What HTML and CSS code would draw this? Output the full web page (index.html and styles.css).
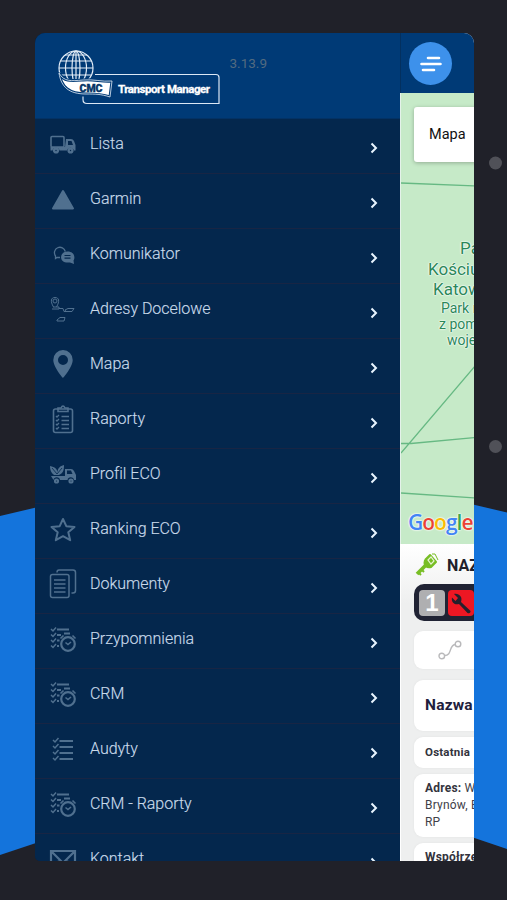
FILE: index.html
```html
<!DOCTYPE html>
<html lang="pl">
<head>
<meta charset="utf-8">
<title>Transport Manager</title>
<link rel="stylesheet" href="styles.css">
</head>
<body>
<svg class="defs" width="0" height="0" aria-hidden="true">
  <defs>
    <symbol id="truck" viewBox="0 0 28 30"><g fill="none" stroke="currentColor" stroke-width="1.6"><rect x="2" y="7.500" width="13" height="10.5" rx="1"/><circle cx="7" cy="21.5" r="1.9" stroke-width="2.400"/><circle cx="21.5" cy="21.5" r="1.9" stroke-width="2.400"/></g><path fill="currentColor" fill-rule="evenodd" d="M17 10h5q2 0 3 2l1.500 4v5.500H25a3.600 3.600 0 0 0-7 0h-7.500a3.600 3.600 0 0 0-7 0H1.500V18H16zM19 12v4h5l-1.500-4z"/></symbol>
    <symbol id="tri" viewBox="0 0 28 30"><path fill="currentColor" stroke="currentColor" stroke-width="2" stroke-linejoin="round" d="M14 7 24 24.500H4z"/></symbol>
    <symbol id="chat" viewBox="0 0 28 30"><path fill="none" stroke="currentColor" stroke-width="1.300" d="M11 18.500H8l-1.500 1v-2.500a5.500 5.500 0 1 1 9.800-4.500"/><path fill="currentColor" d="M18.500 12.500c8 0 7.500 7.500 6 9l.5 3.500-4-1.500c-12 1.500-11-11-2.500-11"/><path stroke="#04274d" stroke-width="1.200" d="M15.500 16.500h6m-6 2.700h6"/></symbol>
    <symbol id="route" viewBox="0 0 28 30"><g fill="none" stroke="currentColor"><path d="M4.500 13C1 7 2 3.500 6 3.500s5 3.500 1.500 9.500M3 15h7v-2H4M10 14.500h4l1 3h4"/><circle cx="6" cy="7" r="2"/><path d="m16 16 3-1.500h6l-2 3h-6zM8 26l3-2.500h5l-1 3.500H8z"/></g></symbol>
    <symbol id="pin" viewBox="0 0 28 30"><path fill="currentColor" fill-rule="evenodd" d="M14 1A9.700 9.700 0 0 0 4.300 11c0 7 9.700 18 9.700 18s9.700-11 9.700-18A9.700 9.700 0 0 0 14 1m0 5a5 5 0 1 1 0 10 5 5 0 0 1 0-10"/></symbol>
    <symbol id="clip" viewBox="0 0 28 30"><g fill="none" stroke="currentColor" stroke-width="1.600"><rect x="4.500" y="5" width="19" height="23.500" rx="2"/><path d="M9 7.500V4h3q2-4 4 0h3v3.500z"/><path stroke-width="1.300" d="m7 12 1 1 2-2m-3 5 1 1 2-2m-3 5 1 1 2-2m-3 5 1 1 2-2M12.500 12.500H20m-7.500 4H20m-7.500 4H20m-7.500 4H20"/></g></symbol>
    <symbol id="eco" viewBox="0 0 28 30"><path fill="currentColor" d="M1 7c5 1 7 3 7.500 6C9 9 11 7 15 6c0 6-1 8-5 10H5C2 14 1 11 1 7M2 17h14v-7h6q2 0 3 2l2 4v5h-2a3.300 3.300 0 0 0-6.500 0H11a3.300 3.300 0 0 0-6.500 0z"/><path fill="#04274d" d="M18 11.500h4l1.500 3.500H18z"/><g fill="none" stroke="currentColor" stroke-width="2"><circle cx="7.500" cy="22" r="1.600"/><circle cx="22" cy="22" r="1.600"/></g><path stroke="#04274d" stroke-width=".8" fill="none" d="m3 9 5 6 5-6"/></symbol>
    <symbol id="star" viewBox="0 0 28 30"><path fill="none" stroke="currentColor" stroke-width="2" stroke-linejoin="round" d="m14 5 3.300 7.200 8.200.8-6.200 5.300 1.900 7.900-7.200-4-7.200 4 1.900-7.900-6.200-5.300 8.200-.8z"/></symbol>
    <symbol id="docs" viewBox="0 0 28 30"><g fill="none" stroke="currentColor" stroke-width="1.500"><rect x="1.500" y="5.500" width="18.500" height="23" rx="2"/><path d="M8 3.500Q8 1 10 1h14q2.500 0 2.500 2.500v18Q26.500 24 24 24h-1.500M5 11h11.500M5 15h11.500M5 19h11.500M5 23h11.500"/></g></symbol>
    <symbol id="tasks" viewBox="0 0 28 30"><g fill="none" stroke="currentColor"><path stroke-width="1.500" d="m2 5 2 2 3-3.500M2 10.500l2 2L7 9M2 16l2 2 3-3.500M2 21.500l2 2L7 20"/><path stroke-width="1.800" d="M8 5.500h12M8 11h4m3-1.500h6M8 16.500h2.500M8 22h2"/><circle cx="19" cy="20" r="6.800" stroke-width="2.200"/><path stroke-width="1.600" d="m16.500 18.500 2.500 2 3-2.500M11.500 14.500l3-3m9 0 3 3"/></g></symbol>
    <symbol id="checks" viewBox="0 0 28 30"><path fill="none" stroke="currentColor" stroke-width="1.500" d="m4 6 2 2 3.500-4M4 12l2 2 3.500-4M4 18l2 2 3.500-4M4 24l2 2 3.500-4"/><path stroke="currentColor" stroke-width="2" d="M10.500 7H24m-13.500 6H24m-13.500 6H24m-13.500 6H24"/></symbol>
    <symbol id="mail" viewBox="0 0 28 30"><path fill="none" stroke="currentColor" stroke-width="2.200" d="M2 7h24v19H2zl12 12L26 7M2 26l8-9m8 0 8 9"/></symbol>
    <symbol id="chev" viewBox="0 0 8 12"><path fill="none" stroke="currentColor" stroke-width="2" d="m1.500 1.500 4.500 4.500-4.500 4.500"/></symbol>
  </defs>
</svg>
<svg class="backdrop" viewBox="0 0 507 900" aria-hidden="true">
  <path fill="#1474dc" d="M0 516 36 507.500V843L0 855zM473 504.500l34 8V849l-34-11.500z"/>
  <circle cx="495.500" cy="163" r="6.500" fill="#505158"/><circle cx="495.500" cy="446.500" r="6.500" fill="#505158"/>
</svg>
<main class="phone">
  <nav class="drawer">
    <header class="brand">
      <svg class="logo" viewBox="0 0 166 58">
        <path d="M37 24.500H158q3 0 3 3V53.500H29q-4 0-4-4v-3" fill="none" stroke="#dce8f5" stroke-width="1.200"/>
        <g fill="none" stroke="#e3edf7" stroke-width="1.200"><circle cx="18" cy="18" r="17"/><ellipse cx="18" cy="18" rx="10.500" ry="17"/><ellipse cx="18" cy="18" rx="4" ry="17"/><path d="M18 1v34M1 18h34M3 11h30M7 5h22M3 25h30"/></g>
        <path d="M1 23c5 9 12 8 24 7 11-1 19 2 29 1l-2 16c-9-3-15-3-24-3C11 44 3 37 1 23z" fill="#fff" stroke="#003a76" stroke-width="3"/>
        <path d="M1 23c5 9 12 8 24 7 11-1 19 2 29 1l-2 16c-9-3-15-3-24-3C11 44 3 37 1 23z" fill="none" stroke="#e3edf7" stroke-width=".8"/>
        <text x="21.500" y="41.500" textLength="23" lengthAdjust="spacingAndGlyphs" class="logo-cmc">CMC</text>
        <text x="60" y="43" textLength="92" lengthAdjust="spacing" class="logo-name">Transport Manager</text>
      </svg>
      <span class="version">3.13.9</span>
    </header>
    <ul class="menu">
      <li><svg class="icon"><use href="#truck"/></svg><span>Lista</span><svg class="chev"><use href="#chev"/></svg></li>
      <li><svg class="icon"><use href="#tri"/></svg><span>Garmin</span><svg class="chev"><use href="#chev"/></svg></li>
      <li><svg class="icon"><use href="#chat"/></svg><span>Komunikator</span><svg class="chev"><use href="#chev"/></svg></li>
      <li><svg class="icon"><use href="#route"/></svg><span>Adresy Docelowe</span><svg class="chev"><use href="#chev"/></svg></li>
      <li><svg class="icon"><use href="#pin"/></svg><span>Mapa</span><svg class="chev"><use href="#chev"/></svg></li>
      <li><svg class="icon"><use href="#clip"/></svg><span>Raporty</span><svg class="chev"><use href="#chev"/></svg></li>
      <li><svg class="icon"><use href="#eco"/></svg><span>Profil ECO</span><svg class="chev"><use href="#chev"/></svg></li>
      <li><svg class="icon"><use href="#star"/></svg><span>Ranking ECO</span><svg class="chev"><use href="#chev"/></svg></li>
      <li><svg class="icon"><use href="#docs"/></svg><span>Dokumenty</span><svg class="chev"><use href="#chev"/></svg></li>
      <li><svg class="icon"><use href="#tasks"/></svg><span>Przypomnienia</span><svg class="chev"><use href="#chev"/></svg></li>
      <li><svg class="icon"><use href="#tasks"/></svg><span>CRM</span><svg class="chev"><use href="#chev"/></svg></li>
      <li><svg class="icon"><use href="#checks"/></svg><span>Audyty</span><svg class="chev"><use href="#chev"/></svg></li>
      <li><svg class="icon"><use href="#tasks"/></svg><span>CRM - Raporty</span><svg class="chev"><use href="#chev"/></svg></li>
      <li><svg class="icon"><use href="#mail"/></svg><span>Kontakt</span><svg class="chev"><use href="#chev"/></svg></li>
    </ul>
  </nav>
  <section class="page">
    <header class="topbar">
      <button class="toggle" aria-label="Menu"><svg width="24" height="18" viewBox="0 0 24 18"><path stroke="#fff" stroke-width="2.600" stroke-linecap="round" d="M9 3h11M2.500 9h19M4 15h11"/></svg></button>
    </header>
    <div class="map">
      <svg class="roads" width="74" height="451" viewBox="0 0 74 451"><path fill="none" stroke="#66b983" stroke-width="1.300" d="M0 90l74 3M0 360l74-87M0 350.500h10l64-6M0 400l74 5"/></svg>
      <button class="maptype">Mapa</button>
      <p class="park"><b class="l1">Park</b><b class="l2">Kościuszki</b><b class="l3">Katowice</b><span class="l4">Park miejski</span><span class="l5">z pomnikami</span><span class="l6">wojennymi</span></p>
      <div class="google"><i class="b">G</i><i class="r">o</i><i class="y">o</i><i class="b">g</i><i class="g">l</i><i class="r">e</i></div>
    </div>
    <div class="details">
      <div class="vehicle">
        <svg width="24" height="24" viewBox="0 0 24 24"><path d="M2 21 13 10" stroke="#78be25" stroke-width="3.800"/><path d="m4 20 2 2m1-5 2 2" stroke="#78be25" stroke-width="2"/><path fill="#78be25" stroke="#78be25" stroke-width="2" stroke-linejoin="round" d="m10 7 5-5 6 7-5 5q-4 1-6-2-1-2 0-5"/><path d="m13 7 3-3 3 4-3 3z" fill="none" stroke="#e7f4d3" stroke-width="1.200"/><path d="m17 1 3 0 3 6" fill="none" stroke="#78be25"/></svg>
        <strong>NAZWA</strong>
      </div>
      <div class="status">
        <span class="num">1</span>
        <span class="service"><svg width="24" height="24" viewBox="0 0 24 24"><path fill="#25202d" d="M5 3 9 7 6.500 10 3 6.500c-1 4 2 8 7 6.500l8.500 9q2 1 3-1 .5-1-1-2L12 11c2-5-2-9-7-8"/></svg></span>
      </div>
      <div class="card track"><svg width="24" height="20" viewBox="0 0 24 20"><g fill="none" stroke="#b9b9bb" stroke-width="1.400"><circle cx="3.800" cy="16" r="2.800"/><circle cx="20" cy="4" r="2.800"/><path d="M6.500 15.500c8 0 4-10 10.500-11"/></g></svg></div>
      <div class="card name">Nazwa</div>
      <div class="card last"><b>Ostatnia pozycja</b></div>
      <div class="card address"><b>Adres:</b> W<br>Brynów, Ek<br>RP</div>
      <div class="card coords"><b>Współrzędne</b></div>
    </div>
  </section>
</main>
</body>
</html>
```
FILE: styles.css
```css
* { box-sizing: border-box; }
body { margin: 0; height: 900px; overflow: hidden; background: #202129; font-family: Roboto, sans-serif; padding: 33px 33px 40px 35px; }
.defs { position: absolute; }
.backdrop { position: absolute; left: 0; top: 0; width: 507px; height: 900px; }
.phone { position: relative; display: flex; height: 827.500px; border-radius: 10px 10px 2px 5px; overflow: hidden; background: #04274d; }
.drawer { width: 365px; flex: none; background: #04274d; }
.brand { display: flex; align-items: flex-start; height: 86px; padding: 17px 0 0 23px; background: #003a76; border-bottom: 1px solid #033265; }
.logo { width: 166px; height: 58px; flex: none; }
.logo-cmc { font: 900 11.500px Roboto, sans-serif; fill: #073566; stroke: #073566; stroke-width: .4px; }
.logo-name { font: 700 11.500px Roboto, sans-serif; fill: #fff; stroke: #fff; stroke-width: .3px; }
.version { margin: 3px 0 0 5.500px; font-size: 13.500px; line-height: 20px; color: #536b80; }
.menu { list-style: none; margin: 0; padding: 0; }
.menu li { display: flex; align-items: center; height: 55px; padding: 0 22px 5px 14px; border-bottom: 1px solid #182544; color: #c9daea; font-size: 16px; font-weight: 300; letter-spacing: -.02px; -webkit-text-stroke: .15px #c9daea; }
.icon { width: 28px; height: 30px; flex: none; color: #50708f; }
.menu span { flex: 1; padding-left: 13px; }
.chev { width: 8px; height: 12px; margin-top: 9px; color: #e9f5ff; }
.page { width: 74px; flex: none; overflow: hidden; background: #eeeff0; }
.topbar { height: 60px; padding: 9px 0 0 9px; background: #003a76; border-left: 1px solid #03305f; }
button { font: inherit; border: 0; }
.toggle { display: flex; align-items: center; justify-content: center; width: 43px; height: 43px; padding: 0; margin-left: -1px; border-radius: 50%; background: #3d91eb; }
.map { position: relative; height: 451px; overflow: hidden; background: #c6eac8; border-left: 1px solid #e4f2ea; }
.roads { position: absolute; inset: 0; }
.maptype { position: absolute; left: 13px; top: 14px; width: 100px; height: 55px; padding: 0 0 0 15px; background: #fff; border-radius: 3px; box-shadow: 0 1px 4px #0004; text-align: left; font-size: 14.500px; color: #111; }
.park { position: absolute; left: 0; top: 145px; width: 140px; margin: 0; color: #2b8759; font-size: 14px; line-height: 16px; text-shadow: 0 0 2px #fff, 0 0 2px #fff, 0 0 1px #fff; }
.park b, .park span { display: block; white-space: nowrap; }
.park b { font-size: 17px; line-height: 20.500px; font-weight: 400; }
.l1 { padding-left: 59px; } .l2 { padding-left: 27px; } .l3 { padding-left: 32px; }
.l4 { padding-left: 40px; } .l5 { padding-left: 38px; } .l6 { padding-left: 46px; }
.google { position: absolute; left: 7px; top: 417px; display: flex; font: 600 21px/24px "Open Sans", sans-serif; letter-spacing: -1px; text-shadow: 0 0 2px #fff, 0 0 2px #fff, 0 0 1px #fff; }
.google i { font-style: normal; }
.b { color: #4285f4; } .r { color: #ea4335; } .y { color: #fbbc05; } .g { color: #34a853; }
.details { display: flex; flex-direction: column; padding: 9px 0 0 13px; width: 150px; background: linear-gradient(#fff, #eeefef 60px); height: 317px; border-left: 1px solid #fff; }
.vehicle { display: flex; align-items: center; height: 24px; gap: 8px; padding-left: 1px; font-size: 16px; color: #20202a; }
.status { display: flex; align-items: center; gap: 3px; height: 37px; flex: none; margin-top: 7px; padding-left: 5px; background: #202334; border-radius: 10px; }
.status span { display: flex; align-items: center; justify-content: center; width: 26px; height: 26px; border-radius: 4px; }
.status .num { background: #afafb1; color: #fff; font: 700 24px "Liberation Sans", sans-serif; }
.status .service { background: #ed1723; }
.card { flex: none; width: 140px; padding-left: 11px; background: #fff; border-radius: 9px; box-shadow: 0 0 3px #0000000c; color: #414149; font-size: 12px; letter-spacing: .2px; }
.card b { color: #33333d; }
.track { display: flex; align-items: center; height: 38px; margin-top: 10px; padding-left: 24px; }
.name { height: 51px; margin-top: 11px; font-size: 15.500px; line-height: 50px; font-weight: 700; color: #20203d; }
.last { height: 31px; margin-top: 6px; line-height: 30px; font-size: 11.500px; word-spacing: 2px; }
.address { height: 63px; margin-top: 6px; padding-top: 6px; line-height: 17px; }
.coords { height: 40px; margin-top: 6px; line-height: 28px; }
```
